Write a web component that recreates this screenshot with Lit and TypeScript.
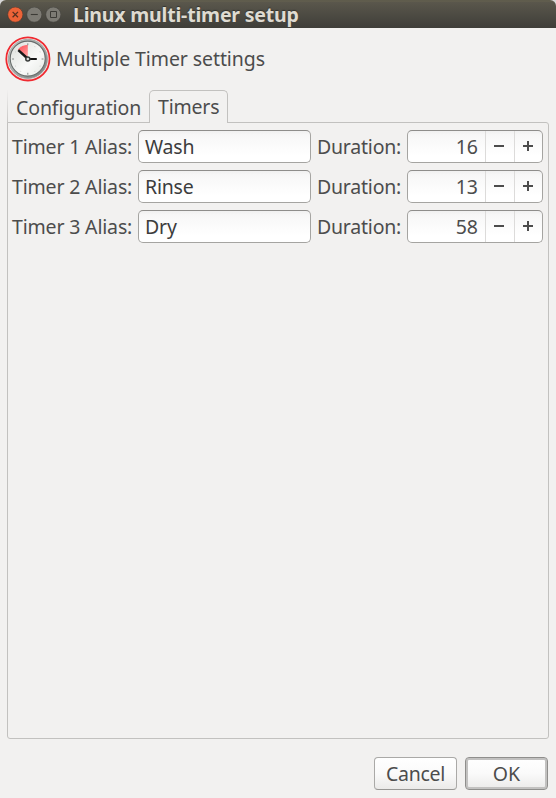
import { LitElement, html, css, svg } from "lit";
import { customElement, property } from "lit/decorators.js";

@customElement("timer-clock")
class TimerClock extends LitElement {
  static styles = css`:host { display: block; width: 46px; height: 46px; } svg { display: block; }`;
  render() {
    const ticks = Array.from({ length: 12 }, (_, i) => i);
    return html`<svg width="46" height="46" viewBox="0 0 46 46">
      <defs>
        <linearGradient id="rim" x1="0" y1="0" x2="1" y2="1">
          <stop offset="0" stop-color="#d0d4d0"/><stop offset=".5" stop-color="#a5aaa8"/><stop offset="1" stop-color="#747877"/>
        </linearGradient>
        <linearGradient id="face" x1="0" y1="0" x2="1" y2="1">
          <stop offset="0" stop-color="#dcdfda"/><stop offset=".6" stop-color="#f8f9f8"/><stop offset="1" stop-color="#e6e8e5"/>
        </linearGradient>
        <linearGradient id="wedge" x1=".2" y1="0" x2=".8" y2="1">
          <stop offset="0" stop-color="#ff5058"/><stop offset="1" stop-color="#ffa8a6"/>
        </linearGradient>
      </defs>
      <circle cx="22.9" cy="22.9" r="21.6" fill="#f7f3f2" stroke="#f02a30" stroke-width="1.8"/>
      <circle cx="22.9" cy="22.9" r="19.6" fill="url(#rim)" stroke="#9ba09e" stroke-width=".8"/>
      <circle cx="22.7" cy="22.6" r="17.5" fill="url(#face)" stroke="#666c6b" stroke-width="1.1"/>
      <path d="M22.8 23V8.8A14.2 14.2 0 0 0 12.8 13.5Z" fill="url(#wedge)"/>
      ${ticks.map((i) => svg`<path d="M22.8 ${i % 3 ? 8.5 : 7.3}V9.2" stroke=${i % 3 ? "#c2c5c2" : "#858a88"} stroke-width="1" transform="rotate(${i * 30} 22.8 23)"/>`)}
      <path d="M22 22L13.3 14.2" stroke="#161616" stroke-width="2.4"/>
      <path d="M24 23H31.8" stroke="#161616" stroke-width="2"/>
      <circle cx="22.8" cy="23" r="2" fill="#d9dcda" stroke="#383b3a" stroke-width="1.5"/>
    </svg>`;
  }
}

@customElement("timer-row")
class TimerRow extends LitElement {
  @property({ type: Number }) index = 1;
  @property() alias = "";
  @property({ type: Number }) minutes = 0;
  static styles = css`
    :host { display: flex; height: 33px; line-height: 33px; white-space: nowrap; }
    .label { width: 126px; letter-spacing: -0.17px; }
    .duration { width: 90px; margin-left: 6px; letter-spacing: -0.22px; }
    .entry, .spin { box-sizing: border-box; height: 33px; border: 1px solid #a5a4a1; border-top-color: #8e8d8b; border-radius: 5px;
      background: linear-gradient(#f0f0f0, #f7f7f7 4px, #fff 80%); line-height: 31px; }
    .entry { width: 173px; padding-left: 6px; color: #3c3c3c; letter-spacing: -0.2px; }
    .spin { width: 136px; display: grid; grid-template-columns: 77px 29px 1fr; }
    .value { text-align: right; padding-right: 7px; }
    .step { border-left: 1px solid #dcdbda; padding: 10px 0 0 8px; }
    svg { display: block; }
  `;
  render() {
    return html`
      <div class="label">Timer ${this.index} Alias:</div>
      <div class="entry">${this.alias}</div>
      <div class="duration">Duration:</div>
      <div class="spin">
        <div class="value">${this.minutes}</div>
        <div class="step"><svg width="10" height="10"><path d="M0 5H10" stroke="#4c4c4c" stroke-width="2"/></svg></div>
        <div class="step"><svg width="10" height="10"><path d="M0 5H10M5 0V10" stroke="#4c4c4c" stroke-width="2"/></svg></div>
      </div>`;
  }
}

@customElement("app-root")
class AppRoot extends LitElement {
  static styles = css`
    :host { display: flex; flex-direction: column; box-sizing: border-box; width: 556px; height: 798px; background: #f2f1f0; color: #4c4c4c;
      font: 19.5px "Noto Sans", sans-serif; white-space: nowrap; overflow: hidden; }
    .titlebar { box-sizing: border-box; height: 28px; display: flex; align-items: center; padding: 1px 0 0 7px; gap: 3px;
      border-radius: 6px 6px 0 0; background: linear-gradient(#58564a, #66624f 1px, #5a574c 2px, #3f3e39); }
    .corner { background: #d8d8d8; }
    .control { display: block; }
    .title { margin-left: 9px; color: #dfdbd2; font-weight: 700; letter-spacing: -0.19px; text-shadow: 0 -1px 1px #33322e; }
    .header { box-sizing: border-box; height: 62px; display: flex; align-items: center; padding-left: 5px; gap: 5px; }
    .heading { letter-spacing: -0.09px; margin-top: -2px; }
    .tabs { display: flex; height: 33px; margin: 0 7px -1px; position: relative; }
    .tab { box-sizing: border-box; }
    .idle { width: 142px; padding: 5px 0 0 8px; line-height: 26px; letter-spacing: -0.1px; border-left: 1px solid; border-image: linear-gradient(#f2f1f0, #c6c5c3) 1; }
    .active { width: 79px; padding-left: 8px; line-height: 32px; letter-spacing: -0.2px; background: #f2f1f0; border: 1px solid #c2c1bf; border-bottom: 0; border-radius: 5px 5px 0 0; }
    .page { box-sizing: border-box; height: 617px; margin: 0 7px; border: 1px solid #c2c1bf; border-radius: 0 3px 3px 3px; padding: 7px 4px;
      display: flex; flex-direction: column; gap: 7px; }
    .actions { display: flex; justify-content: flex-end; gap: 8px; padding: 18px 8px 0; }
    .button { box-sizing: border-box; width: 83px; height: 33px; line-height: 31px; text-align: center; letter-spacing: -0.3px; border: 1px solid #aaa9a7; border-bottom-color: #989795;
      border-radius: 4px; background: linear-gradient(#fff, #fafafa 50%, #ebeae9); }
    .default { border-color: #8f8e8c; box-shadow: inset 0 0 0 2px #c2c1c0; letter-spacing: 0; }
  `;
  render() {
    const timers = [["Wash", 16], ["Rinse", 13], ["Dry", 58]];
    return html`
      <div class="corner"><div class="titlebar">
        <svg class="control" width="16" height="16"><circle cx="8.3" cy="7.6" r="7.6" fill="#ed6337" stroke="#48372f" stroke-width=".6"/><path d="M5.6 4.9l5.4 5.4m0-5.4l-5.4 5.4" stroke="#57301f" stroke-width="1.3"/></svg>
        <svg class="control" width="16" height="16"><circle cx="8.3" cy="7.6" r="7.6" fill="#7d7b74" stroke="#3f3e39" stroke-width=".6"/><path d="M4.8 7.5h7" stroke="#3c3b36" stroke-width="1.1"/></svg>
        <svg class="control" width="16" height="16"><circle cx="8.3" cy="7.6" r="7.6" fill="#7d7b74" stroke="#3f3e39" stroke-width=".6"/><path d="M5.5 4.5h6v6h-6Z" fill="none" stroke="#3c3b36"/></svg>
        <div class="title">Linux multi-timer setup</div>
      </div></div>
      <div class="header"><timer-clock></timer-clock><div class="heading">Multiple Timer settings</div></div>
      <div class="tabs"><div class="tab idle">Configuration</div><div class="tab active">Timers</div></div>
      <div class="page">
        ${timers.map(([name, value], i) => html`<timer-row .index=${i + 1} .alias=${name} .minutes=${value}></timer-row>`)}
      </div>
      <div class="actions"><div class="button">Cancel</div><div class="button default">OK</div></div>`;
  }
}
